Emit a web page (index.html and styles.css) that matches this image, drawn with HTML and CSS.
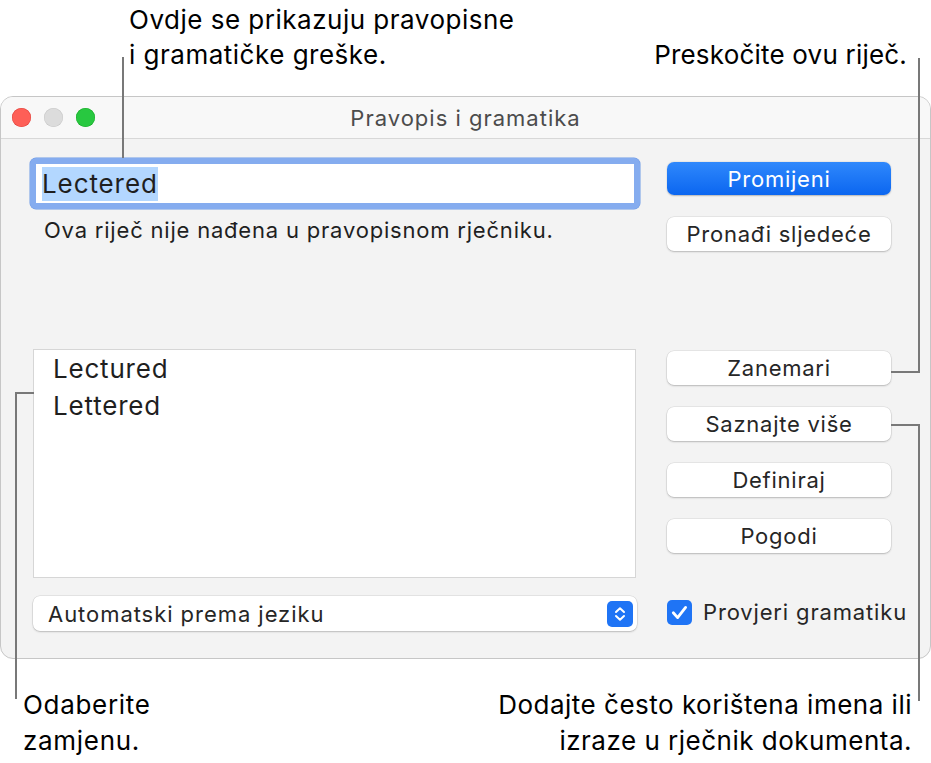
FILE: index.html
```html
<!DOCTYPE html>
<html lang="hr">
<head>
<meta charset="utf-8">
<title>Pravopis i gramatika</title>
<link rel="stylesheet" href="styles.css">
</head>
<body>
<div class="page">
  <div class="notes-top">
    <p class="note note-top">Ovdje se prikazuju pravopisne<br>i gramatičke greške.</p>
    <p class="note note-skip">Preskočite ovu riječ.</p>
  </div>

  <div class="window">
    <div class="titlebar">
      <div class="lights">
        <span class="light red"></span>
        <span class="light gray"></span>
        <span class="light green"></span>
      </div>
      <div class="title">Pravopis i gramatika</div>
      <div></div>
    </div>
    <div class="content">
      <div class="col-left">
        <div class="field"><span class="sel">Lectered</span></div>
        <p class="msg">Ova riječ nije nađena u pravopisnom rječniku.</p>
        <div class="list">
          <div class="item">Lectured</div>
          <div class="item">Lettered</div>
        </div>
        <div class="popup">
          <span>Automatski prema jeziku</span>
          <svg class="stepper" width="26" height="26" viewBox="0 0 26 26">
            <rect x="0" y="0" width="26" height="26" rx="5" fill="#1f74f5"/>
            <path d="M9 11 L13 7.3 L17 11" stroke="#fff" stroke-width="2" fill="none" stroke-linecap="round" stroke-linejoin="round"/>
            <path d="M9 15 L13 18.7 L17 15" stroke="#fff" stroke-width="2" fill="none" stroke-linecap="round" stroke-linejoin="round"/>
          </svg>
        </div>
      </div>
      <div class="col-right">
        <div class="btn primary">Promijeni</div>
        <div class="btn btn-next">Pronađi sljedeće</div>
        <div class="btn btn-ignore">Zanemari</div>
        <div class="btn btn-gap">Saznajte više</div>
        <div class="btn btn-gap">Definiraj</div>
        <div class="btn btn-gap">Pogodi</div>
        <div class="check-row">
          <svg class="check" width="25" height="25" viewBox="0 0 25 25">
            <rect x="0" y="0" width="25" height="25" rx="5" fill="#1f74f5"/>
            <path d="M6.3 12.8 L10.6 17.6 L18.6 7.4" stroke="#fff" stroke-width="2.8" fill="none" stroke-linecap="round" stroke-linejoin="round"/>
          </svg>
          <span class="check-label">Provjeri gramatiku</span>
        </div>
      </div>
    </div>
  </div>

  <div class="notes-bottom">
    <p class="note note-choose">Odaberite<br>zamjenu.</p>
    <p class="note note-add">Dodajte često korištena imena ili<br>izraze u rječnik dokumenta.</p>
  </div>

  <div class="lead lead-a"></div>
  <div class="lead lead-b"></div>
  <div class="lead lead-c"></div>
  <div class="lead lead-d"></div>
</div>
</body>
</html>
```

FILE: styles.css
```css
* { box-sizing: border-box; }

body {
  margin: 0;
  background: #ffffff;
  font-family: Inter, "Noto Sans", "Liberation Sans", sans-serif;
  color: #000;
}

.page {
  position: relative;
  width: 931px;
  height: 763px;
  overflow: hidden;
}

/* annotation texts */
.notes-top {
  height: 96px;
  display: flex;
  justify-content: space-between;
}

.note {
  margin: 0;
  font-size: 26px;
  letter-spacing: 0.5px;
  line-height: 35px;
  color: #000;
  white-space: nowrap;
}

.note-top {
  margin-left: 129px;
  padding-top: 2px;
}

.note-skip {
  margin-top: 37px;
  margin-right: 24px;
  letter-spacing: 0.2px;
}

.notes-bottom {
  display: flex;
  justify-content: space-between;
  padding-top: 28px;
}

.note-choose {
  margin-left: 23px;
  line-height: 36px;
  letter-spacing: 0.7px;
}

.note-add {
  margin-right: 19px;
  text-align: right;
  line-height: 36px;
}

/* window */
.window {
  width: 931px;
  height: 563px;
  border: 1px solid #c6c6c6;
  border-radius: 13px;
  background: #f3f3f3;
  overflow: hidden;
}

.titlebar {
  height: 42px;
  display: grid;
  grid-template-columns: 1fr auto 1fr;
  align-items: center;
  background: #f8f8f8;
  border-bottom: 1px solid #d8d8d8;
}

.lights {
  display: flex;
  gap: 13px;
  margin-left: 11px;
}

.light {
  width: 19px;
  height: 19px;
  border-radius: 50%;
}

.red { background: #fe5f57; box-shadow: inset 0 0 0 0.5px #e0443e; }
.gray { background: #dcdcdc; box-shadow: inset 0 0 0 0.5px #c8c8c8; }
.green { background: #28c840; box-shadow: inset 0 0 0 0.5px #1aab29; }

.title {
  font-size: 22px;
  letter-spacing: 1px;
  color: #4c4c4c;
}

.content {
  display: flex;
  gap: 27px;
  padding-left: 29px;
}

.col-left {
  width: 610px;
  display: flex;
  flex-direction: column;
}

.field {
  margin-top: 19px;
  height: 51px;
  border: 6px solid #85acef;
  border-radius: 6px;
  background: #fff;
  padding-left: 6px;
  display: flex;
  align-items: center;
  box-shadow: 0 0 0 0.5px #6f9be6;
}

.sel {
  background: #b3d7ff;
  font-size: 26px;
  letter-spacing: 0.9px;
  line-height: 34px;
  color: #1f1f1f;
}

.msg {
  margin: 8px 0 0 14px;
  font-size: 22px;
  letter-spacing: 0.8px;
  line-height: 26px;
  color: #1f1f1f;
  white-space: nowrap;
}

.list {
  margin: 106px 0 0 3px;
  width: 603px;
  height: 229px;
  background: #fff;
  border: 1px solid #d6d6d6;
  padding: 0 0 0 19px;
}

.item {
  font-size: 26px;
  letter-spacing: 0.8px;
  line-height: 37px;
  color: #1f1f1f;
}

.popup {
  margin: 18px 0 0 3px;
  width: 604px;
  height: 35px;
  background: #fff;
  border-radius: 7px;
  box-shadow: 0 0 0 0.5px rgba(0, 0, 0, 0.12), 0 1px 2px rgba(0, 0, 0, 0.18);
  display: flex;
  align-items: center;
  justify-content: space-between;
  padding: 0 4px 0 15px;
  font-size: 22px;
  letter-spacing: 0.95px;
  color: #262626;
}

.stepper { display: block; }

.col-right {
  width: 224px;
  display: flex;
  flex-direction: column;
}

.btn {
  height: 34px;
  border-radius: 7px;
  background: #fff;
  box-shadow: 0 0 0 0.5px rgba(0, 0, 0, 0.1), 0 1px 2px rgba(0, 0, 0, 0.2);
  display: flex;
  align-items: center;
  justify-content: center;
  font-size: 22px;
  letter-spacing: 0.75px;
  color: #262626;
  white-space: nowrap;
}

.primary {
  margin-top: 23px;
  height: 33px;
  background: linear-gradient(#2f88fc, #0b66f0);
  color: #fff;
  box-shadow: 0 0.5px 1.5px rgba(0, 0, 0, 0.25);
}

.btn-next { margin-top: 22px; }
.btn-ignore { margin-top: 100px; }
.btn-gap { margin-top: 22px; }

.check-row {
  margin-top: 46px;
  display: flex;
  align-items: center;
  height: 26px;
}

.check { display: block; flex: none; }

.check-label {
  margin-left: 11px;
  font-size: 22px;
  letter-spacing: 0.85px;
  color: #262626;
  white-space: nowrap;
}

/* leader lines */
.lead {
  position: absolute;
  border-color: #787878;
  border-style: solid;
  border-width: 0;
}

.lead-a {
  left: 122px;
  top: 57px;
  width: 2px;
  height: 101px;
  border-left-width: 2px;
}

.lead-b {
  left: 891px;
  top: 58px;
  width: 29px;
  height: 315px;
  border-right-width: 2px;
  border-bottom-width: 2px;
}

.lead-c {
  left: 891px;
  top: 424px;
  width: 29px;
  height: 277px;
  border-right-width: 2px;
  border-top-width: 2px;
}

.lead-d {
  left: 15px;
  top: 392px;
  width: 19px;
  height: 307px;
  border-left-width: 2px;
  border-top-width: 2px;
}
```
